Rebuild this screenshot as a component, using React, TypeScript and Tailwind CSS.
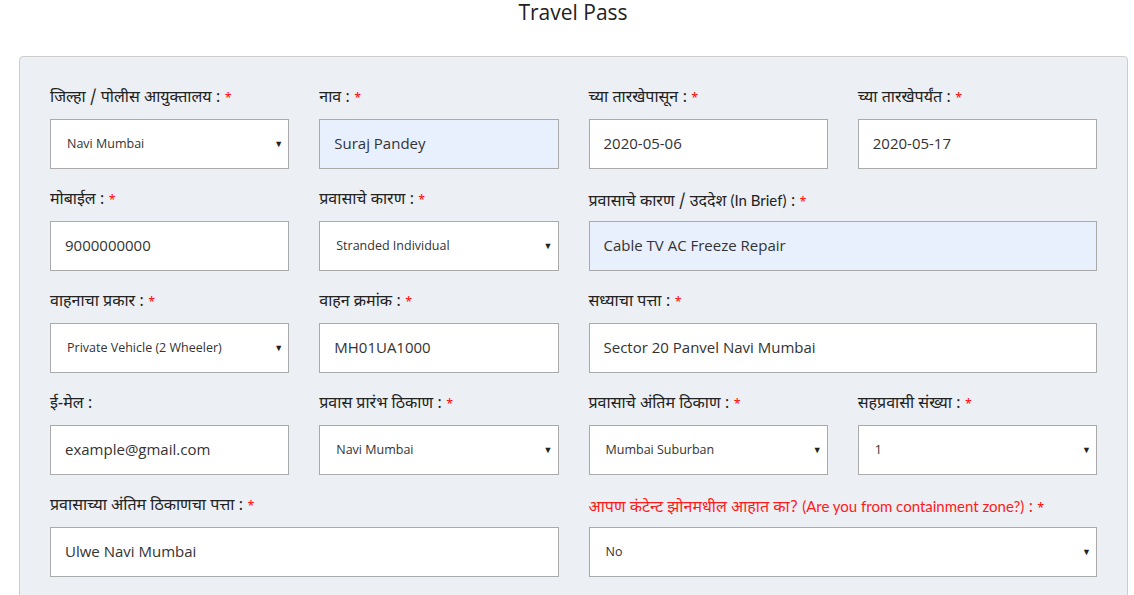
import { type ReactNode } from "react";

const labelFont = { fontFamily: '"Noto Sans Devanagari", "Lohit Devanagari", "Noto Sans", Lato, sans-serif' };

function Label({ text, required = true, red = false }: { text: ReactNode; required?: boolean; red?: boolean }) {
  return (
    <label
      className={`block h-[21px] text-[16px] leading-[21px] whitespace-nowrap ${red ? "text-[#ff1a1a]" : "text-[#222]"}`}
      style={labelFont}
    >
      {text}
      {required && <span className="ml-[4px] text-[12px] text-[#ff0000]">*</span>}
    </label>
  );
}

function TextField({ value, filled = false }: { value: string; filled?: boolean }) {
  return (
    <input
      readOnly
      value={value}
      className={`h-[50px] w-full border border-[#aaa] px-[14px] pb-[2px] text-[15px] text-[#333] outline-none ${
        filled ? "bg-[#e8f0fe]" : "bg-white"
      }`}
      style={{ fontFamily: '"Open Sans", Lato, sans-serif' }}
    />
  );
}

function SelectField({ value }: { value: string }) {
  return (
    <div className="relative h-[50px] w-full border border-[#aaa] bg-white">
      <select
        defaultValue={value}
        className="h-full w-full appearance-none bg-transparent pl-[16px] pt-[1px] text-[12.5px] text-[#333] outline-none"
        style={{ fontFamily: '"Open Sans", Lato, sans-serif' }}
      >
        <option>{value}</option>
      </select>
      <span className="pointer-events-none absolute right-[5px] top-[17px] text-[9px] text-[#222]">▼</span>
    </div>
  );
}

function Field({ label, children, span2 = false }: { label: ReactNode; children: ReactNode; span2?: boolean }) {
  return (
    <div className={`flex flex-col gap-[10px] ${span2 ? "col-span-2" : ""}`}>
      {label}
      {children}
    </div>
  );
}

export default function App() {
  return (
    <div className="min-h-[595px] bg-white">
      <h1
        className="-mt-[2px] pl-[12px] text-center text-[21px] leading-[28px] text-[#222]"
        style={{ fontFamily: '"Open Sans", Lato, sans-serif' }}
      >
        Travel Pass
      </h1>

      <div className="ml-[19px] mr-[6px] mt-[30px] rounded-t-[4px] border border-[#ccc] bg-[#eceff4] px-[30px] pt-[31px] pb-[30px]">
        <div className="grid grid-cols-4 gap-x-[30px] gap-y-[21px]">
          <Field label={<Label text="जिल्हा / पोलीस आयुक्तालय :" />}>
            <SelectField value="Navi Mumbai" />
          </Field>
          <Field label={<Label text="नाव :" />}>
            <TextField value="Suraj Pandey" filled />
          </Field>
          <Field label={<Label text="च्या तारखेपासून :" />}>
            <TextField value="2020-05-06" />
          </Field>
          <Field label={<Label text="च्या तारखेपर्यंत :" />}>
            <TextField value="2020-05-17" />
          </Field>

          <Field label={<Label text="मोबाईल :" />}>
            <TextField value="9000000000" />
          </Field>
          <Field label={<Label text="प्रवासाचे कारण :" />}>
            <SelectField value="Stranded Individual" />
          </Field>
          <Field
            span2
            label={
              <Label
                text={
                  <>
                    प्रवासाचे कारण / उददेश <span className="font-[Lato] text-[15px]">(In Brief)</span> :
                  </>
                }
              />
            }
          >
            <TextField value="Cable TV AC Freeze Repair" filled />
          </Field>

          <Field label={<Label text="वाहनाचा प्रकार :" />}>
            <SelectField value="Private Vehicle (2 Wheeler)" />
          </Field>
          <Field label={<Label text="वाहन क्रमांक :" />}>
            <TextField value="MH01UA1000" />
          </Field>
          <Field span2 label={<Label text="सध्याचा पत्ता :" />}>
            <TextField value="Sector 20 Panvel Navi Mumbai" />
          </Field>

          <Field label={<Label text="ई-मेल :" required={false} />}>
            <TextField value="example@gmail.com" />
          </Field>
          <Field label={<Label text="प्रवास प्रारंभ ठिकाण :" />}>
            <SelectField value="Navi Mumbai" />
          </Field>
          <Field label={<Label text="प्रवासाचे अंतिम ठिकाण :" />}>
            <SelectField value="Mumbai Suburban" />
          </Field>
          <Field label={<Label text="सहप्रवासी संख्या :" />}>
            <SelectField value="1" />
          </Field>

          <Field span2 label={<Label text="प्रवासाच्या अंतिम ठिकाणचा पत्ता :" />}>
            <TextField value="Ulwe Navi Mumbai" />
          </Field>
          <Field
            span2
            label={
              <Label
                red
                text={
                  <>
                    आपण कंटेन्ट झोनमधील आहात का?{" "}
                    <span className="font-[Lato] text-[15px]">(Are you from containment zone?)</span> :
                  </>
                }
              />
            }
          >
            <SelectField value="No" />
          </Field>
        </div>
      </div>
    </div>
  );
}
